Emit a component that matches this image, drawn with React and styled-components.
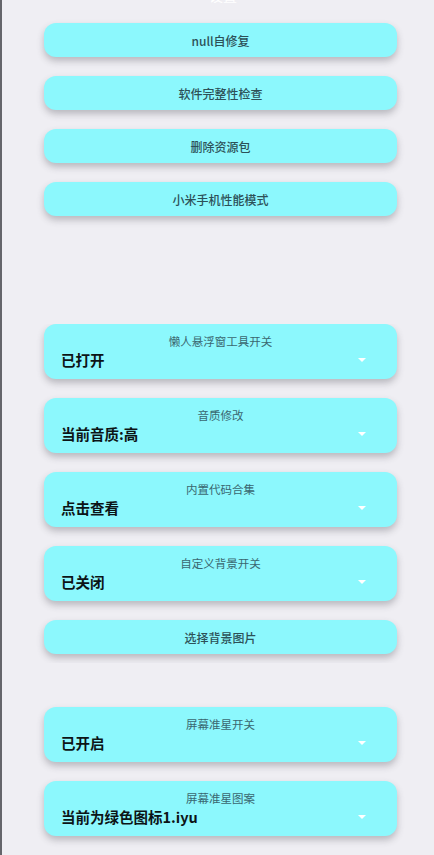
import styled, { createGlobalStyle } from "styled-components";

const GlobalStyle = createGlobalStyle`
  body {
    margin: 0;
    background: #efeef3;
    font-family: "Noto Sans CJK SC", "Noto Sans", sans-serif;
  }
`;

const Page = styled.div`
  min-height: 855px;
  border-left: 2px solid #65656b;
  box-sizing: border-box;
  overflow: hidden;
`;

const Header = styled.div`
  height: 35px;
  margin-top: -12px;
  text-align: center;
  color: #ffffff;
  font-size: 14px;
  line-height: 14px;
  padding-left: 10px;
`;

const Section = styled.section`
  display: flex;
  flex-direction: column;
  gap: 19px;
  padding: 0 36px 0 42px;
  margin-top: ${(p) => p.top || 0}px;
  padding-bottom: ${(p) => p.bottom || 0}px;
  overflow: ${(p) => (p.clip ? "hidden" : "visible")};
`;

const Card = styled.div`
  background: #8cf8fd;
  border-radius: 12px;
  box-shadow: 0 4px 7px rgba(60, 60, 70, 0.3);
  width: 353px;
  box-sizing: border-box;
`;

const Button = styled(Card)`
  height: 34px;
  display: flex;
  align-items: center;
  justify-content: center;
  font-size: 12px;
  font-weight: 500;
  color: #2d5158;
`;

const Select = styled(Card)`
  height: 55px;
  padding: 8px 17px 0;
  display: flex;
  flex-direction: column;
`;

const Title = styled.div`
  text-align: center;
  font-size: 11.5px;
  line-height: 18px;
  color: #3a6770;
`;

const ValueRow = styled.div`
  display: flex;
  align-items: center;
  justify-content: space-between;
  height: 19px;
`;

const Value = styled.span`
  font-size: 14.5px;
  font-weight: 700;
  color: #0c1416;
`;

const Arrow = styled.span`
  width: 0;
  height: 0;
  margin-right: 14px;
  border-left: 4px solid transparent;
  border-right: 4px solid transparent;
  border-top: 4px solid #ffffff;
`;

const Dropdown = ({ title, value }) => (
  <Select>
    <Title>{title}</Title>
    <ValueRow>
      <Value>{value}</Value>
      <Arrow />
    </ValueRow>
  </Select>
);

const App = () => (
  <>
    <GlobalStyle />
    <Page>
      <Header>设置</Header>
      <Section>
        <Button>null自修复</Button>
        <Button>软件完整性检查</Button>
        <Button>删除资源包</Button>
        <Button>小米手机性能模式</Button>
      </Section>
      <Section top={108} bottom={9} clip>
        <Dropdown title="懒人悬浮窗工具开关" value="已打开" />
        <Dropdown title="音质修改" value="当前音质:高" />
        <Dropdown title="内置代码合集" value="点击查看" />
        <Dropdown title="自定义背景开关" value="已关闭" />
        <Button>选择背景图片</Button>
      </Section>
      <Section top={44}>
        <Dropdown title="屏幕准星开关" value="已开启" />
        <Dropdown title="屏幕准星图案" value="当前为绿色图标1.iyu" />
      </Section>
    </Page>
  </>
);

export default App;
